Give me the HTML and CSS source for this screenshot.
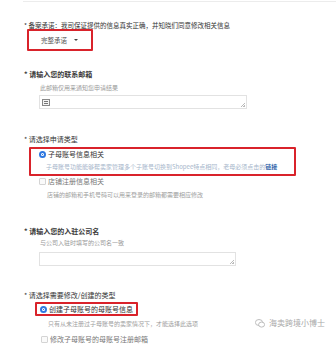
FILE: index.html
```html
<!DOCTYPE html>
<html lang="zh">
<head>
<meta charset="utf-8">
<link rel="stylesheet" href="styles.css">
</head>
<body>
<div class="page">
  <div class="topline"></div>

  <div class="label l1">* 备案承诺：我司保证提供的信息真实正确，并知晓们同意修改相关信息</div>
  <div class="select-box">
    <span class="select-text">完整承诺</span>
    <span class="caret"></span>
  </div>

  <div class="label bold l2">* 请输入您的联系邮箱</div>
  <div class="hint h2">此邮箱仅用来通知您申请结果</div>
  <div class="field f2">
    <svg class="field-icon" width="8" height="7" viewBox="0 0 8 7"><rect x="0.5" y="0.5" width="7" height="6" fill="#f4f4f4" stroke="#888" stroke-width="1"/><path d="M2 2.5h4M2 4.5h4" stroke="#777" stroke-width="1"/></svg>
    <span class="grip"></span>
  </div>

  <div class="label l3">* 请选择申请类型</div>
  <div class="redbox rb1">
    <div class="option opt-on"><span class="radio on"></span><span>子母账号信息相关</span></div>
    <div class="desc desc-blue">子母账号功能能够帮卖家管理多个子账号切换到Shopee特点相同，老母必须点击的<b class="link">链接</b></div>
  </div>
  <div class="option opt-off o2"><span class="radio off"></span><span>店铺注册信息相关</span></div>
  <div class="desc d2">店铺的邮箱和手机号码可以用来登录的邮箱都需要相应修改</div>

  <div class="label bold l4">* 请输入您的入驻公司名</div>
  <div class="hint h4">与公司入驻时填写的公司名一致</div>
  <div class="field f4"><span class="grip"></span></div>

  <div class="label l5">* 请选择需要修改/创建的类型</div>
  <div class="redbox rb2">
    <div class="option opt-on"><span class="radio on"></span><span>创建子母账号的母账号信息</span></div>
  </div>
  <div class="desc d5">只有从未注册过子母账号的卖家情况下，才能选择此选项</div>
  <div class="option opt-off o5"><span class="radio off"></span><span>修改子母账号的母账号注册邮箱</span></div>

  <div class="watermark">
    <svg width="10" height="9" viewBox="0 0 10 9"><ellipse cx="4" cy="3.5" rx="3.6" ry="3" fill="none" stroke="#b5b5b5" stroke-width="0.9"/><ellipse cx="6.6" cy="5.6" rx="3" ry="2.5" fill="#fff" stroke="#b5b5b5" stroke-width="0.9"/></svg>
    <span>海卖跨境小博士</span>
  </div>
</div>
</body>
</html>
```
FILE: styles.css
```css
html, body {
  margin: 0;
  padding: 0;
  background: #ffffff;
}
body {
  font-family: "Noto Sans CJK SC", "Noto Sans", sans-serif;
  width: 336px;
  height: 345px;
  overflow: hidden;
}
.page {
  position: relative;
  padding-left: 24px;
  height: 345px;
  box-sizing: border-box;
}
.topline {
  height: 1px;
  margin-top: 1px;
  margin-left: -1px;
  background: #ececec;
}
.label {
  font-size: 7px;
  line-height: 8px;
  color: #333;
  white-space: nowrap;
}
.label.bold {
  font-weight: 700;
  color: #3a3a3a;
}
.hint {
  font-size: 6px;
  line-height: 8px;
  color: #9a9a9a;
  margin-left: 16px;
  white-space: nowrap;
}
.l1 { margin-top: 19px; font-size: 6.5px; }
.select-box {
  margin-left: 3px;
  width: 66px;
  height: 22px;
  box-sizing: border-box;
  border: 2px solid #d9232b;
  border-radius: 1px;
  display: flex;
  align-items: center;
  padding-left: 12px;
  gap: 7px;
}
.select-text {
  font-size: 6.5px;
  color: #555;
  line-height: 8px;
}
.caret {
  width: 0;
  height: 0;
  border-left: 2px solid transparent;
  border-right: 2px solid transparent;
  border-top: 2.5px solid #444;
}
.l2 { margin-top: 19px; }
.h2 { margin-top: 6px; }
.field {
  position: relative;
  margin-left: 15px;
  height: 14px;
  box-sizing: border-box;
  border: 1px solid #e2e2e2;
  background: #fff;
  display: flex;
  align-items: center;
  padding-left: 2px;
}
.f2 { margin-top: 3px; width: 208px; }
.f4 { margin-top: 5px; width: 197px; }
.grip {
  position: absolute;
  right: 1px;
  bottom: 1px;
  width: 4px;
  height: 4px;
  background: linear-gradient(135deg, transparent 45%, #bbb 45%, #bbb 58%, transparent 58%, transparent 75%, #bbb 75%);
}
.l3 { margin-top: 26px; }
.redbox {
  box-sizing: border-box;
  border: 2px solid #d9232b;
  border-radius: 1px;
}
.rb1 {
  margin-top: 4px;
  margin-left: 5px;
  width: 267px;
  height: 29px;
  padding: 1px 0 0 8px;
}
.option {
  display: flex;
  align-items: center;
  gap: 2px;
  font-size: 7px;
  line-height: 8px;
  white-space: nowrap;
}
.opt-on { color: #333; }
.opt-off { color: #777; }
.radio {
  width: 7px;
  height: 7px;
  box-sizing: border-box;
  border-radius: 50%;
  flex: none;
}
.radio.on {
  border: 2px solid #2f78e0;
  background: radial-gradient(circle, #2f78e0 0 0.8px, #fff 1px);
}
.radio.off {
  border: 1px solid #d4d4d4;
  border-radius: 1px;
  background: #fafafa;
}
.desc {
  font-size: 6px;
  line-height: 8px;
  color: #a0a0a0;
  white-space: nowrap;
}
.desc-blue {
  margin-top: 5px;
  margin-left: 7px;
  color: #a6b5ca;
}
.link {
  color: #2d5fa8;
  font-weight: 700;
}
.o2 { margin-top: 1px; margin-left: 15px; }
.d2 { margin-top: 6px; margin-left: 23px; }
.l4 { margin-top: 28px; }
.h4 { margin-top: 4px; }
.l5 { margin-top: 25px; }
.rb2 {
  margin-top: 3px;
  margin-left: 11px;
  width: 103px;
  height: 14px;
  padding: 1px 0 0 3px;
}
.d5 { margin-top: 4px; margin-left: 24px; }
.o5 { margin-top: 7px; margin-left: 17px; }
.watermark {
  position: absolute;
  left: 255px;
  top: 317px;
  display: flex;
  align-items: center;
  gap: 4px;
  font-size: 8px;
  line-height: 10px;
  color: #a8a8a8;
  white-space: nowrap;
}
```
